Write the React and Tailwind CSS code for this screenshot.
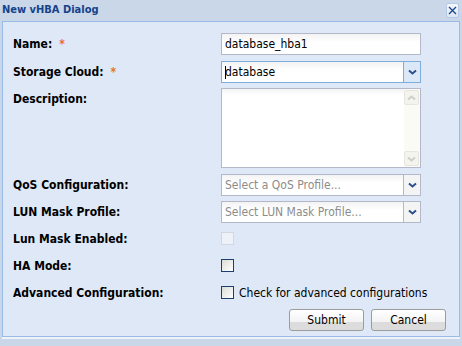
import React from 'react';

const font = { fontFamily: '"DejaVu Sans Condensed", "DejaVu Sans", Tahoma, Verdana, sans-serif' };

const Chevron = ({ color = '#2d4f8e' }) => (
  <svg width="9" height="6" viewBox="0 0 9 6">
    <path d="M1 1.5 L4.5 4.5 L8 1.5" fill="none" stroke={color} strokeWidth="2" />
  </svg>
);

const ChevronUp = ({ color = '#cfcfc8' }) => (
  <svg width="9" height="6" viewBox="0 0 9 6">
    <path d="M1 4.5 L4.5 1.5 L8 4.5" fill="none" stroke={color} strokeWidth="2" />
  </svg>
);

const Label = ({ children, required, className = '' }) => (
  <div className={`w-[208px] shrink-0 text-[12px] font-bold text-black ${className}`}>
    {children}
    {required && <span className="ml-[7px] text-[#e8712c]">*</span>}
  </div>
);

const Combo = ({ placeholder, value, focused }) => (
  <div
    className={`flex h-[22px] w-[200px] border ${
      focused ? 'border-[#7eadd9]' : 'border-[#b5b8c8]'
    } bg-gradient-to-b from-[#f3f3f3] to-white to-[40%]`}
  >
    <div className={`flex flex-1 items-center px-[3px] text-[12px] ${value ? 'text-black' : 'text-[#8c8c8c]'}`}>
      {focused && <span className="mr-[-1px] inline-block h-[13px] w-px bg-black" />}
      {value || placeholder}
    </div>
    <div
      className={`flex w-[17px] items-center justify-center border-l ${
        focused ? 'border-[#7eadd9] bg-[#dbe8f8]' : 'border-[#b5b8c8] bg-[#f4f4f4]'
      }`}
    >
      <Chevron />
    </div>
  </div>
);

const Checkbox = ({ disabled }) => (
  <div
    className={`h-[13px] w-[13px] border ${
      disabled ? 'border-[#d2d8e0] bg-[#eef2f8]' : 'border-[#1c3f6e] bg-gradient-to-br from-[#dcdcd6] to-white'
    }`}
  />
);

const Button = ({ children, className = '' }) => (
  <button
    className={`h-[22px] rounded-[3px] border border-[#9c9c9c] bg-gradient-to-b from-white via-[#f3f3f3] via-[60%] to-[#dcdcdc] to-[62%] text-[12px] text-black ${className}`}
  >
    {children}
  </button>
);

export default function App() {
  return (
    <div className="h-[346px] w-[462px] bg-[#c9d7e8]" style={font}>
      <div className="flex h-[21px] items-center justify-between pl-[2px] pr-[3px]">
        <div className="text-[11px] font-bold text-[#15428b]">New vHBA Dialog</div>
        <div className="flex h-[15px] w-[13px] items-center justify-center rounded-[2px] border border-[#b6c9e4] bg-gradient-to-b from-[#f4f8fd] to-[#dbe6f5]">
          <svg width="9" height="9" viewBox="0 0 9 9">
            <path d="M1 1 L8 8 M8 1 L1 8" stroke="#1f4a8a" strokeWidth="1.4" />
          </svg>
        </div>
      </div>
      <div className="mx-[2px] h-[316px] border border-[#99bbe8] bg-[#dfe8f6] pl-[10px] pt-[11px]">
        <div className="flex items-center">
          <Label required>Name:</Label>
          <div className="flex h-[22px] w-[200px] items-center border border-[#b5b8c8] bg-gradient-to-b from-[#f3f3f3] to-white to-[40%] px-[3px] text-[12px] text-black">
            database_hba1
          </div>
        </div>
        <div className="mt-[6px] flex items-center">
          <Label required>Storage Cloud:</Label>
          <Combo value="database" focused />
        </div>
        <div className="mt-[5px] flex">
          <Label className="pt-[2px]">Description:</Label>
          <div className="flex h-[80px] w-[200px] border border-[#b5b8c8] bg-gradient-to-b from-[#f3f3f3] to-white to-[8%]">
            <div className="flex-1" />
            <div className="flex w-[16px] flex-col justify-between bg-[#fbfbf6] py-px">
              <div className="flex h-[15px] w-[15px] items-center justify-center rounded-[2px] border border-[#e6e6de] bg-[#f4f4ee]">
                <ChevronUp />
              </div>
              <div className="flex h-[15px] w-[15px] items-center justify-center rounded-[2px] border border-[#e6e6de] bg-[#f4f4ee]">
                <Chevron color="#cfcfc8" />
              </div>
            </div>
          </div>
        </div>
        <div className="mt-[6px] flex items-center">
          <Label>QoS Configuration:</Label>
          <Combo placeholder="Select a QoS Profile..." />
        </div>
        <div className="mt-[5px] flex items-center">
          <Label>LUN Mask Profile:</Label>
          <Combo placeholder="Select LUN Mask Profile..." />
        </div>
        <div className="mt-[2px] flex h-[27px] items-center">
          <Label>Lun Mask Enabled:</Label>
          <Checkbox disabled />
        </div>
        <div className="flex h-[27px] items-center">
          <Label>HA Mode:</Label>
          <Checkbox />
        </div>
        <div className="flex h-[27px] items-center">
          <Label>Advanced Configuration:</Label>
          <Checkbox />
          <span className="ml-[5px] text-[12px] text-black">Check for advanced configurations</span>
        </div>
        <div className="mt-[3px] flex justify-end gap-[7px] pr-[13px]">
          <Button className="w-[75px]">Submit</Button>
          <Button className="w-[75px]">Cancel</Button>
        </div>
      </div>
      <div className="mx-[2px] h-[2px] bg-[#eef3fa]" />
    </div>
  );
}
